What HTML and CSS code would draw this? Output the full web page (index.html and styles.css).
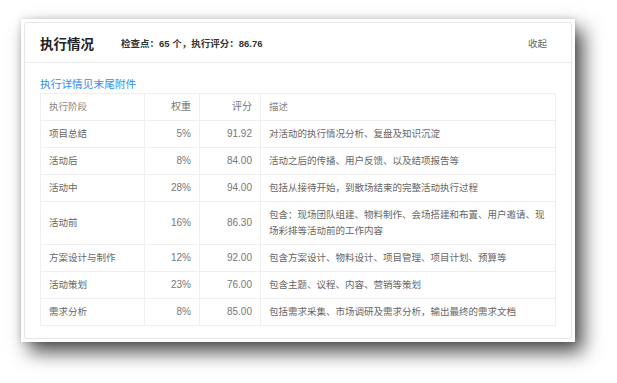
FILE: index.html
```html
<!DOCTYPE html>
<html lang="zh-CN">
<head>
    <meta charset="UTF-8">
    <title>执行情况</title>
    <link rel="stylesheet" href="styles.css">
</head>
<body>
    <div class="frame">
        <div class="panel">
            <div class="panel-header">
                <h2 class="panel-title">执行情况</h2>
                <span class="panel-summary">检查点：65 个，执行评分：86.76</span>
                <a class="panel-toggle">收起</a>
            </div>

            <div class="panel-body">
                <a class="detail-link">执行详情见末尾附件</a>

                <table class="stage-table">
                    <colgroup>
                        <col class="col-stage">
                        <col class="col-weight">
                        <col class="col-score">
                        <col>
                    </colgroup>
                    <thead>
                        <tr>
                            <th>执行阶段</th>
                            <th class="num">权重</th>
                            <th class="num">评分</th>
                            <th>描述</th>
                        </tr>
                    </thead>
                    <tbody>
                        <tr>
                            <td>项目总结</td>
                            <td class="num">5%</td>
                            <td class="num">91.92</td>
                            <td>对活动的执行情况分析、复盘及知识沉淀</td>
                        </tr>
                        <tr>
                            <td>活动后</td>
                            <td class="num">8%</td>
                            <td class="num">84.00</td>
                            <td>活动之后的传播、用户反馈、以及结项报告等</td>
                        </tr>
                        <tr>
                            <td>活动中</td>
                            <td class="num">28%</td>
                            <td class="num">94.00</td>
                            <td>包括从接待开始，到散场结束的完整活动执行过程</td>
                        </tr>
                        <tr>
                            <td>活动前</td>
                            <td class="num">16%</td>
                            <td class="num">86.30</td>
                            <td>包含：现场团队组建、物料制作、会场搭建和布置、用户邀请、现场彩排等活动前的工作内容</td>
                        </tr>
                        <tr>
                            <td>方案设计与制作</td>
                            <td class="num">12%</td>
                            <td class="num">92.00</td>
                            <td>包含方案设计、物料设计、项目管理、项目计划、预算等</td>
                        </tr>
                        <tr>
                            <td>活动策划</td>
                            <td class="num">23%</td>
                            <td class="num">76.00</td>
                            <td>包含主题、议程、内容、营销等策划</td>
                        </tr>
                        <tr>
                            <td>需求分析</td>
                            <td class="num">8%</td>
                            <td class="num">85.00</td>
                            <td>包括需求采集、市场调研及需求分析，输出最终的需求文档</td>
                        </tr>
                    </tbody>
                </table>
            </div>
        </div>
    </div>
</body>
</html>
```

FILE: styles.css
```css
* {
    margin: 0;
    padding: 0;
    box-sizing: border-box;
}

html,
body {
    height: 100%;
}

body {
    font-family: "Liberation Sans", "Noto Sans CJK SC", sans-serif;
    background: #fff;
    color: #666;
    padding: 19px 0 0 21px;
}

.frame {
    width: 554px;
    padding: 3px;
    background: #fff;
    box-shadow: 8px 10px 18px rgba(0, 0, 0, 0.7), 0 0 6px rgba(0, 0, 0, 0.15);
}

.panel {
    border: 1px solid #e6e6e6;
    border-radius: 3px;
    background: #fff;
}

.panel-header {
    display: flex;
    align-items: center;
    height: 40px;
    padding: 0 24px 0 15px;
    border-bottom: 1px solid #ebebeb;
}

.panel-title {
    font-size: 13.5px;
    font-weight: 700;
    color: #222;
}

.panel-summary {
    margin-left: 27px;
    font-size: 9.5px;
    font-weight: 700;
    color: #333;
}

.panel-toggle {
    margin-left: auto;
    font-size: 9.5px;
    color: #666;
    cursor: pointer;
}

.panel-body {
    padding: 13px 15px 12px;
}

.detail-link {
    display: block;
    font-size: 10.7px;
    line-height: 17px;
    color: #2e8df0;
    cursor: pointer;
}

.stage-table {
    width: 100%;
    table-layout: fixed;
    border-collapse: collapse;
    font-size: 9.5px;
}

.col-stage {
    width: 104px;
}

.col-weight {
    width: 55px;
}

.col-score {
    width: 61px;
}

.stage-table th,
.stage-table td {
    padding: 5px 8px;
    line-height: 16px;
    border: 1px solid #efefef;
    text-align: left;
    vertical-align: middle;
}

.stage-table th {
    font-weight: 400;
    color: #888;
}

.stage-table td {
    color: #666;
}

.stage-table .num {
    font-size: 10px;
    color: #777;
    text-align: right;
}
```
